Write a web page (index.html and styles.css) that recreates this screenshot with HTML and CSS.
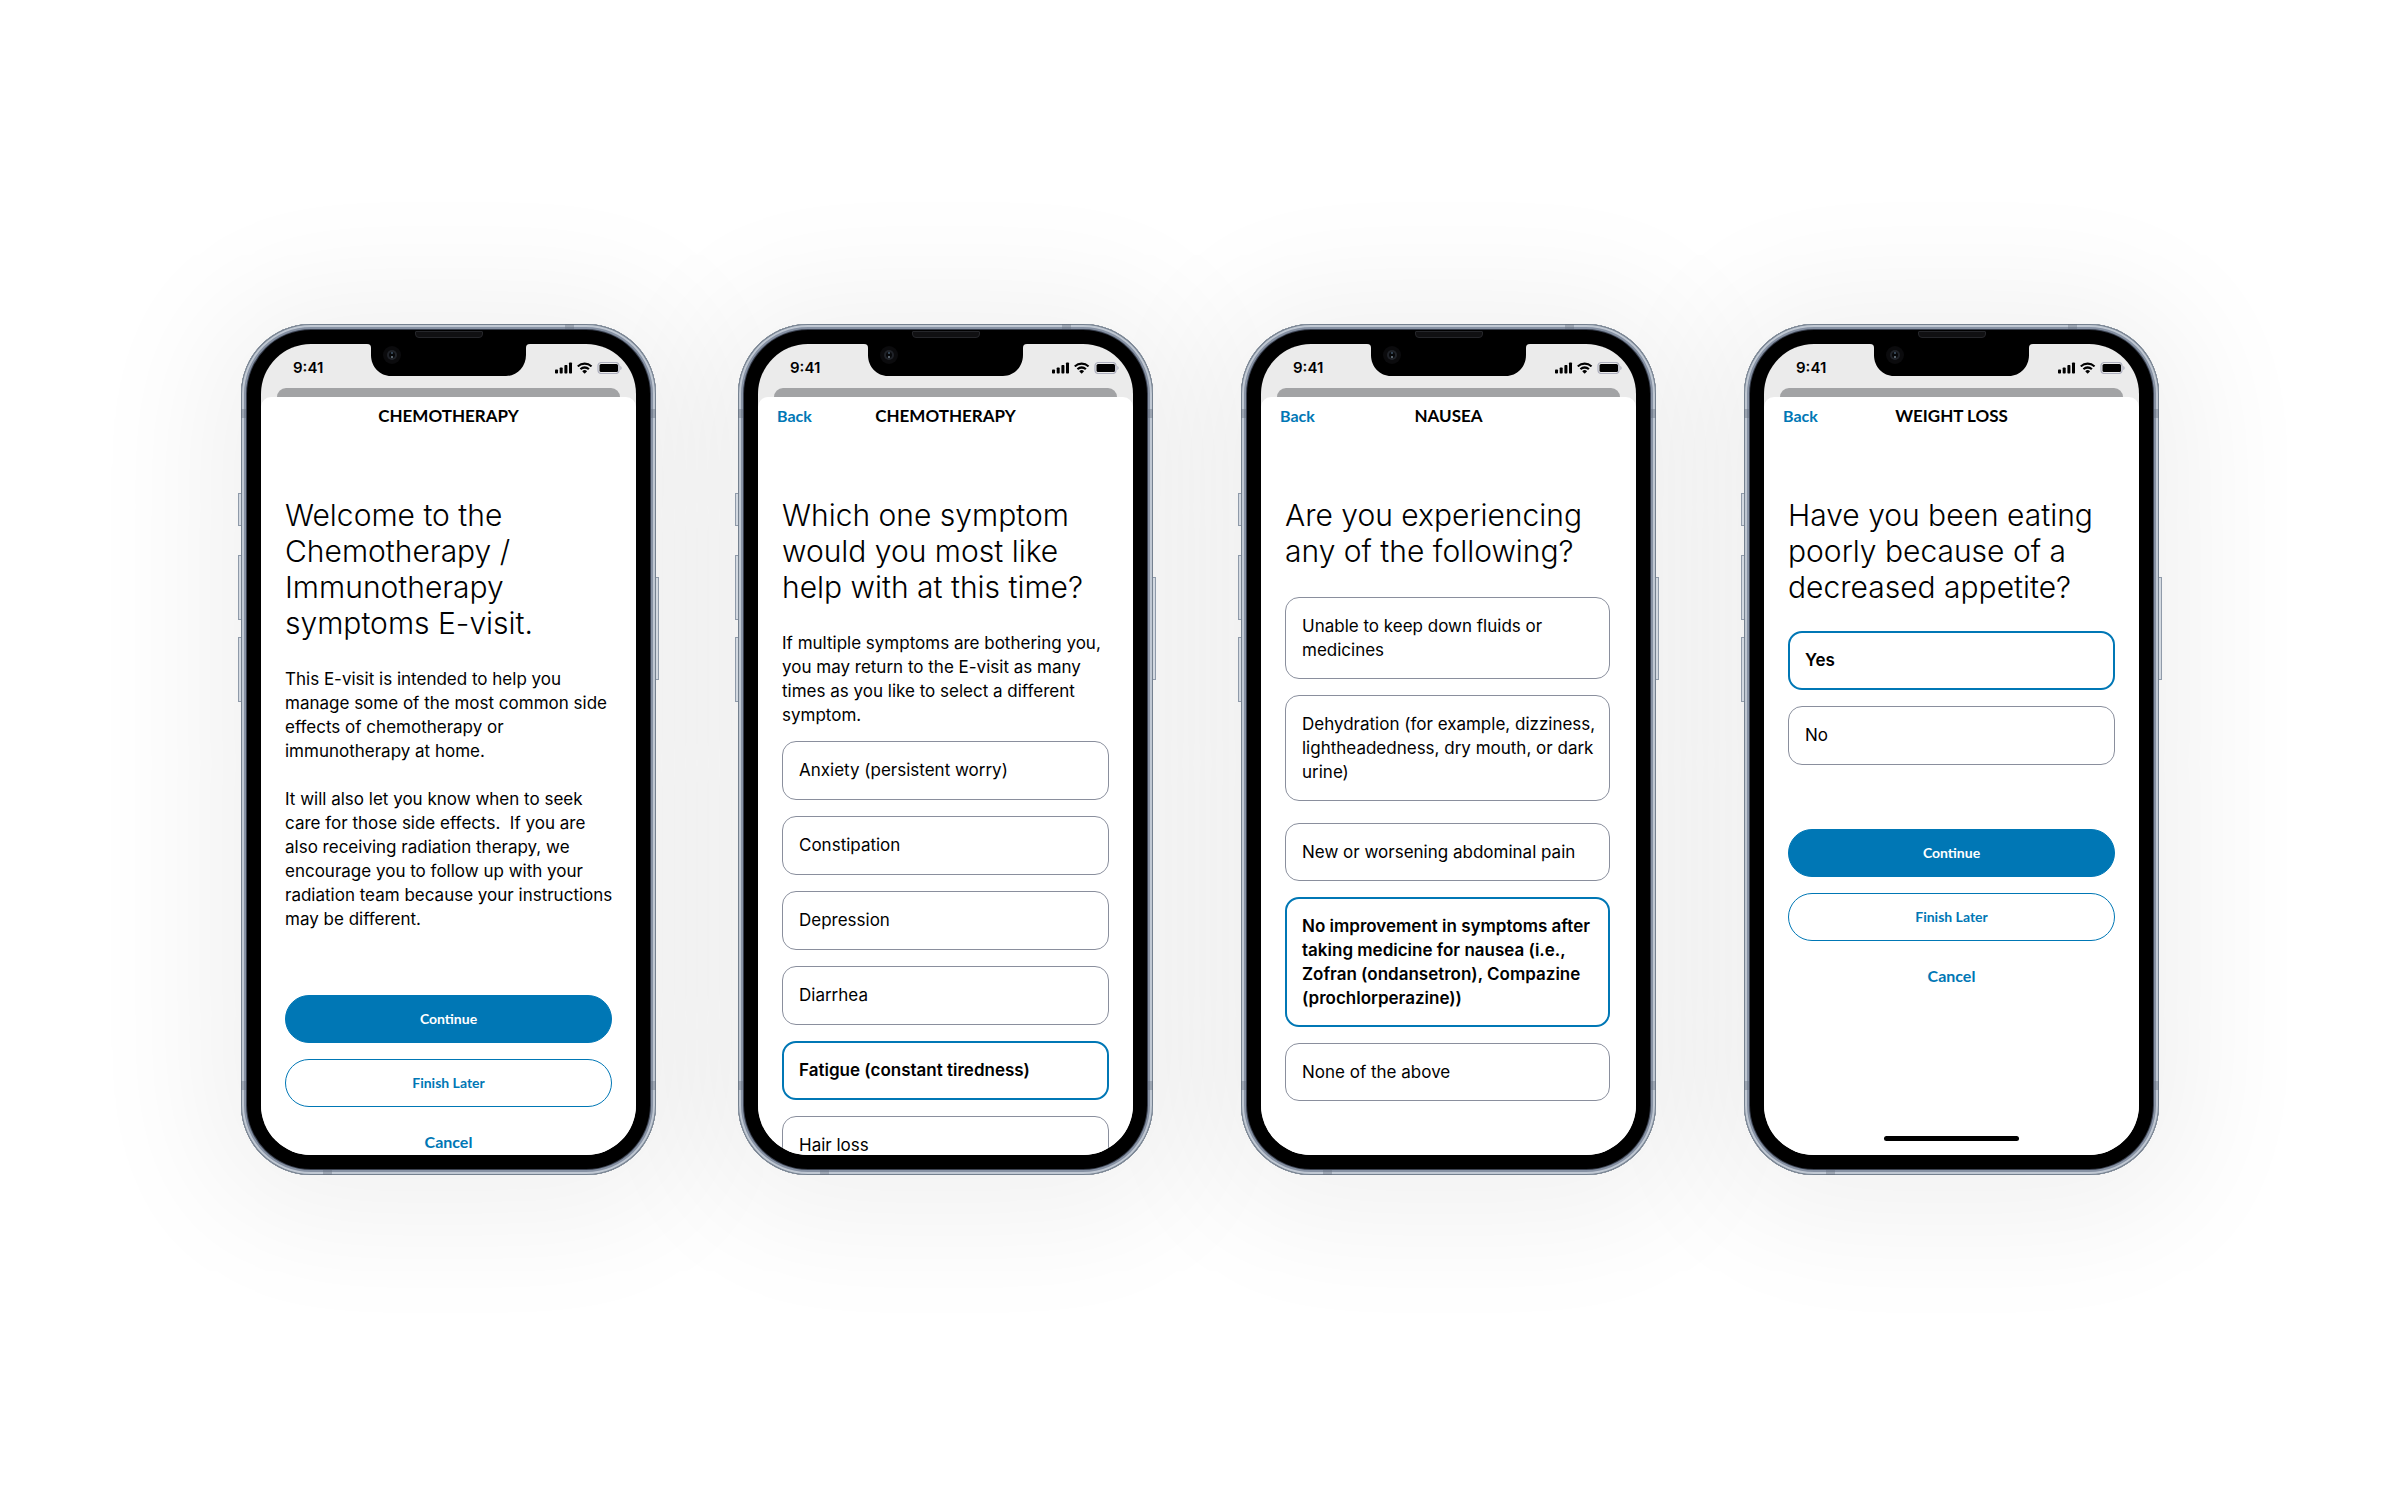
FILE: index.html
```html
<!DOCTYPE html>
<html lang="en">
<head>
<meta charset="utf-8">
<meta name="viewport" content="width=device-width, initial-scale=1">
<title>E-visit screens</title>
<link rel="stylesheet" href="styles.css">
</head>
<body>
<svg class="sprite" aria-hidden="true">
  <symbol id="status-icons" viewBox="0 0 67 12">
    <rect x="0" y="7.500" width="3" height="4" rx=".8"/>
    <rect x="4.700" y="5.500" width="3" height="6" rx=".8"/>
    <rect x="9.400" y="3" width="3" height="8.500" rx=".8"/>
    <rect x="14" y=".5" width="3" height="11" rx=".8"/>
    <path transform="translate(-3 -.5) scale(1.100)" d="M29.700 3c2 0 3.900.8 5.300 2.100.1.100.3.100.4 0l1-1.100c.1-.1.100-.3 0-.4a9.700 9.700 0 0 0-13.400 0c-.1.100-.1.300 0 .4l1 1.100c.1.100.3.100.4 0C25.800 3.800 27.700 3 29.700 3zm0 3.500c1.100 0 2.100.4 2.900 1.100.1.100.3.100.4 0l1-1.100c.1-.1.100-.3 0-.4a6.200 6.200 0 0 0-8.600 0c-.1.100-.1.300 0 .4l1 1.100c.1.100.3.100.4 0 .8-.7 1.800-1.100 2.900-1.100zm2 2.500c.1-.1.100-.3 0-.4a3 3 0 0 0-4 0c-.1.100-.1.300 0 .4l1.700 1.800c.1.100.4.100.5 0z"/>
    <rect x="43" y=".5" width="21" height="11" rx="3.500" fill="none" stroke="#adafbe" stroke-width="1.200"/>
    <path d="M65.300 4v4c.8-.3 1.300-1.100 1.300-2s-.5-1.700-1.300-2z" fill="#adafbe"/>
    <rect x="44.500" y="2" width="18.500" height="8" rx="1.500"/>
  </symbol>
  <symbol id="notch" viewBox="0 0 163 33">
    <path d="M0 0h163c-3 0-4 1.500-4 4v7c0 12-9 21-20 21H24C13 32 4 23 4 11V4c0-2.500-1-4-4-4z"/>
    <circle cx="25" cy="11" r="9" fill="#0b0b0d"/>
    <circle cx="25" cy="11" r="5" fill="#202329"/>
    <circle cx="25" cy="11" r="3" fill="#07080a"/>
    <circle cx="25" cy="9" r="1" fill="#41566a"/>
    <circle cx="25" cy="13" r="1" fill="#73818c"/>
  </symbol>
</svg>

<main class="gallery">
  <section class="phone" aria-label="Welcome">
    <i class="key key-mute"></i><i class="key key-up"></i><i class="key key-down"></i><i class="key key-power"></i>
    <i class="speaker"></i>
    <div class="screen">
      <svg class="notch" aria-hidden="true"><use href="#notch"/></svg>
      <div class="status"><time>9:41</time><svg class="status-icons" aria-hidden="true"><use href="#status-icons"/></svg></div>
      <div class="sheet">
        <header class="bar"><h2 class="title">CHEMOTHERAPY</h2></header>
        <div class="content">
          <h1 class="heading">Welcome to the<br>Chemotherapy /<br>Immunotherapy<br>symptoms E-visit.</h1>
          <p class="text">This E-visit is intended to help you<br>manage some of the most common side<br>effects of chemotherapy or<br>immunotherapy at home.</p>
          <p class="text">It will also let you know when to seek<br>care for those side effects.&nbsp; If you are<br>also receiving radiation therapy, we<br>encourage you to follow up with your<br>radiation team because your instructions<br>may be different.</p>
          <div class="actions">
            <button class="button primary" type="button">Continue</button>
            <button class="button" type="button">Finish Later</button>
            <a class="cancel" href="#">Cancel</a>
          </div>
        </div>
      </div>
    </div>
  </section>

  <section class="phone" aria-label="Symptom choice">
    <i class="key key-mute"></i><i class="key key-up"></i><i class="key key-down"></i><i class="key key-power"></i>
    <i class="speaker"></i>
    <div class="screen">
      <svg class="notch" aria-hidden="true"><use href="#notch"/></svg>
      <div class="status"><time>9:41</time><svg class="status-icons" aria-hidden="true"><use href="#status-icons"/></svg></div>
      <div class="sheet">
        <header class="bar"><a class="back" href="#">Back</a><h2 class="title">CHEMOTHERAPY</h2></header>
        <div class="content">
          <h1 class="heading">Which one symptom<br>would you most like<br>help with at this time?</h1>
          <p class="text">If multiple symptoms are bothering you,<br>you may return to the E-visit as many<br>times as you like to select a different<br>symptom.</p>
          <div class="options options-near">
            <label class="option"><input type="radio" name="symptom"><span>Anxiety (persistent worry)</span></label>
            <label class="option"><input type="radio" name="symptom"><span>Constipation</span></label>
            <label class="option"><input type="radio" name="symptom"><span>Depression</span></label>
            <label class="option"><input type="radio" name="symptom"><span>Diarrhea</span></label>
            <label class="option"><input type="radio" name="symptom" checked><span>Fatigue (constant tiredness)</span></label>
            <label class="option"><input type="radio" name="symptom"><span>Hair loss</span></label>
          </div>
        </div>
      </div>
    </div>
  </section>

  <section class="phone" aria-label="Nausea">
    <i class="key key-mute"></i><i class="key key-up"></i><i class="key key-down"></i><i class="key key-power"></i>
    <i class="speaker"></i>
    <div class="screen">
      <svg class="notch" aria-hidden="true"><use href="#notch"/></svg>
      <div class="status"><time>9:41</time><svg class="status-icons" aria-hidden="true"><use href="#status-icons"/></svg></div>
      <div class="sheet">
        <header class="bar"><a class="back" href="#">Back</a><h2 class="title">NAUSEA</h2></header>
        <div class="content">
          <h1 class="heading">Are you experiencing<br>any of the following?</h1>
          <div class="options options-text">
            <label class="option"><input type="radio" name="nausea"><span>Unable to keep down fluids or<br>medicines</span></label>
            <label class="option option-last"><input type="radio" name="nausea"><span>Dehydration (for example, dizziness,<br>lightheadedness, dry mouth, or dark<br>urine)</span></label>
            <label class="option"><input type="radio" name="nausea"><span>New or worsening abdominal pain</span></label>
            <label class="option"><input type="radio" name="nausea" checked><span>No improvement in symptoms after<br>taking medicine for nausea (i.e.,<br>Zofran (ondansetron), Compazine<br>(prochlorperazine))</span></label>
            <label class="option"><input type="radio" name="nausea"><span>None of the above</span></label>
          </div>
        </div>
      </div>
    </div>
  </section>

  <section class="phone" aria-label="Weight loss">
    <i class="key key-mute"></i><i class="key key-up"></i><i class="key key-down"></i><i class="key key-power"></i>
    <i class="speaker"></i>
    <div class="screen">
      <svg class="notch" aria-hidden="true"><use href="#notch"/></svg>
      <div class="status"><time>9:41</time><svg class="status-icons" aria-hidden="true"><use href="#status-icons"/></svg></div>
      <div class="sheet">
        <header class="bar"><a class="back" href="#">Back</a><h2 class="title">WEIGHT LOSS</h2></header>
        <div class="content">
          <h1 class="heading">Have you been eating<br>poorly because of a<br>decreased appetite?</h1>
          <div class="options">
            <label class="option"><input type="radio" name="appetite" checked><span>Yes</span></label>
            <label class="option"><input type="radio" name="appetite"><span>No</span></label>
          </div>
          <div class="actions">
            <button class="button primary" type="button">Continue</button>
            <button class="button" type="button">Finish Later</button>
            <a class="cancel" href="#">Cancel</a>
          </div>
        </div>
      </div>
      <i class="home"></i>
    </div>
  </section>
</main>
</body>
</html>
```
FILE: styles.css
```css
:root {
  --blue: #0077b5;
  --line: #8a8f9d;
  --band: rgba(100, 110, 125, .4);
}

* { box-sizing: border-box; }

body {
  margin: 0;
  background: #fff;
  color: #000;
  font: 17px/24px Inter, "Open Sans", sans-serif;
}

h1, h2, p { margin: 0; }

.sprite { position: absolute; width: 0; height: 0; }

.gallery {
  isolation: isolate;
  min-height: 100vh;
  padding-bottom: 2px;
  display: grid;
  grid-template-columns: 497px 503px 503px 415px;
  place-content: center;
}

/* Device */
.phone {
  position: relative;
  width: 415px;
  height: 851px;
  padding: 20px;
  border-radius: 70px;
  background: #000;
  box-shadow:
    inset 0 0 0 1px #75818f,
    inset 0 0 0 3px #c0c8d3,
    inset 0 0 0 5px #8792a4,
    inset 0 0 0 6px #3a4150;
}

/* Soft shadow, kept behind every device */
.phone::before {
  content: "";
  position: absolute;
  inset: 0;
  z-index: -1;
  border-radius: 70px;
  box-shadow: 0 8px 130px 36px rgba(0, 0, 0, .06);
}

/* Antenna bands */
.phone::after {
  content: "";
  position: absolute;
  inset: 0;
  pointer-events: none;
  background:
    linear-gradient(var(--band), var(--band)) left 0 top 85px / 5px 9px,
    linear-gradient(var(--band), var(--band)) right 0 top 85px / 5px 9px,
    linear-gradient(var(--band), var(--band)) left 0 bottom 85px / 5px 9px,
    linear-gradient(var(--band), var(--band)) right 0 bottom 85px / 5px 9px,
    linear-gradient(var(--band), var(--band)) right 82px top 0 / 9px 5px,
    linear-gradient(var(--band), var(--band)) left 82px bottom 0 / 9px 5px;
  background-repeat: no-repeat;
}

.key {
  position: absolute;
  left: -3px;
  width: 3px;
  border: 1px solid #8f9aa9;
  border-right: 0;
  background: #d3d9e1;
}
.key-mute { top: 169px; height: 33px; }
.key-up { top: 231px; height: 65px; }
.key-down { top: 313px; height: 65px; }
.key-power { left: auto; right: -3px; top: 253px; height: 103px; border: 1px solid #8f9aa9; border-left: 0; }

.speaker {
  position: absolute;
  top: 7px;
  left: 50%;
  width: 68px;
  height: 7px;
  margin-left: -34px;
  border: 1px solid #25262a;
  border-radius: 1px 1px 4px 4px;
  background: #101012;
}

.screen {
  position: relative;
  height: 100%;
  display: flex;
  flex-direction: column;
  overflow: hidden;
  border-radius: 50px;
  background: #ebebeb;
}

.notch {
  position: absolute;
  top: 0;
  left: 50%;
  width: 163px;
  height: 33px;
  margin-left: -82px;
}

.status {
  display: flex;
  justify-content: space-between;
  align-items: center;
  height: 44px;
  padding: 4px 14px 0 32px;
  font-size: 15px;
  font-weight: 600;
}
.status-icons { width: 67px; height: 12px; }

.sheet {
  position: relative;
  flex: 1;
  min-height: 0;
  margin-top: 9px;
  border-radius: 10px 10px 0 0;
  background: #fff;
}
.sheet::before {
  content: "";
  position: absolute;
  left: 16px;
  right: 16px;
  top: -9px;
  height: 9px;
  border-radius: 9px 9px 0 0;
  background: #a2a3a5;
}

.bar {
  display: grid;
  grid-template-columns: 1fr auto 1fr;
  align-items: center;
  height: 39px;
  padding: 0 19px;
  font-family: Lato, "Open Sans", sans-serif;
}
.title { grid-column: 2; font-size: 17px; line-height: 24px; font-weight: 700; }
.back { grid-row: 1; grid-column: 1; font-size: 16px; font-weight: 700; color: var(--blue); text-decoration: none; }

.content {
  display: flex;
  flex-direction: column;
  padding: 61px 24px 0;
  white-space: nowrap;
}

.heading { font-size: 30px; line-height: 36px; font-weight: 300; margin-bottom: 26px; }
.text + .text { margin-top: 24px; }

/* Answers */
.options { display: flex; flex-direction: column; gap: 16px; }
.options-near { margin-top: 14px; }
.options-text { margin: 2px 2px 0 0; }

.option {
  position: relative;
  display: flex;
  align-items: center;
  min-height: 59px;
  padding: 17px;
}
.options-text .option { min-height: 58px; }
.option-last { margin-bottom: 6px; }

.option input {
  appearance: none;
  position: absolute;
  inset: 0;
  margin: 0;
  border: 1px solid var(--line);
  border-radius: 14px;
}
.option input:checked { border: 2px solid var(--blue); }
.option input:checked + span { font-weight: 600; }

/* Actions */
.actions {
  display: flex;
  flex-direction: column;
  gap: 16px;
  margin-top: 64px;
  font-family: Lato, "Open Sans", sans-serif;
}

.button {
  height: 48px;
  padding: 0;
  border: 1px solid var(--blue);
  border-radius: 24px;
  background: #fff;
  color: var(--blue);
  font: 700 14px/20px Lato, "Open Sans", sans-serif;
}
.primary { background: var(--blue); color: #fff; }

.cancel {
  align-self: center;
  margin-top: 7px;
  color: var(--blue);
  font-size: 16px;
  line-height: 24px;
  font-weight: 700;
  text-decoration: none;
}

.home {
  position: absolute;
  bottom: 14px;
  left: 50%;
  width: 135px;
  height: 5px;
  margin-left: -68px;
  border-radius: 3px;
  background: #000;
}
```
